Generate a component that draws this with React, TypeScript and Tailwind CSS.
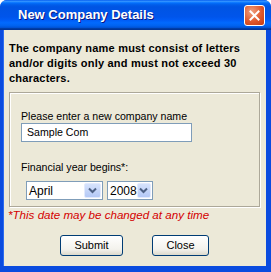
import React from "react";

function Chevron() {
  return (
    <svg width="9" height="7" viewBox="0 0 9 7">
      <path d="M1 1.5 L4.5 5 L8 1.5" fill="none" stroke="#4D6185" strokeWidth="2" />
    </svg>
  );
}

function Select({ value, width }: { value: string; width: string }) {
  return (
    <div className={`${width} h-[19px] bg-white border border-[#7F9DB9] flex items-stretch`}>
      <div className="flex-1 flex items-center pl-[2px] text-[12px] text-black leading-none">{value}</div>
      <div className="w-[17px] m-[1px] ml-0 rounded-[2px] border border-[#E2EAFD] bg-[linear-gradient(to_bottom,#D6E2FC,#B4C9F6)] flex items-center justify-center">
        <Chevron />
      </div>
    </div>
  );
}

function XPButton({ label, width }: { label: string; width: string }) {
  return (
    <button className={`${width} h-[21px] rounded-[3px] border border-[#003C74] bg-[linear-gradient(to_bottom,#FFFFFF,#F3F2EC_70%,#DCD9CC)] text-[11px] text-black flex items-center justify-center`}>
      {label}
    </button>
  );
}

export default function App() {
  return (
    <div className="w-[271px] h-[272px] bg-white" style={{ fontFamily: '"Liberation Sans", Arial, sans-serif' }}>
      <div className="w-[271px] h-[272px] rounded-t-[7px] bg-[#0A4BDF] flex flex-col overflow-hidden">
        <div className="h-[30px] shrink-0 flex items-center pl-[18px] pr-[6px] bg-[linear-gradient(to_bottom,#0058EE_0%,#3593FF_4%,#288EFF_6%,#127DFF_8%,#036FFC_10%,#0262EE_14%,#0057E5_20%,#0054E3_24%,#0055EB_56%,#005BF5_66%,#026AFE_76%,#0062EF_86%,#0052D6_92%,#0040AB_94%,#003092_100%)]">
          <div className="flex-1 text-white font-bold text-[13px] [text-shadow:1px_1px_#0A1883]">New Company Details</div>
          <div className="w-[21px] h-[21px] rounded-[3px] border border-white bg-[radial-gradient(circle_at_35%_30%,#F0A080,#E0582C_55%,#C23A10)] flex items-center justify-center">
            <svg width="11" height="11" viewBox="0 0 11 11">
              <path d="M1.5 1.5 L9.5 9.5 M9.5 1.5 L1.5 9.5" stroke="white" strokeWidth="2" strokeLinecap="square" />
            </svg>
          </div>
        </div>
        <div className="flex-1 ml-[3px] mr-[5px] mb-[6px] bg-[#ECE9D8] border-l border-[#2C6BEF] flex flex-col">
          <div className="pt-[11px] pl-[5px] pr-[2px] text-[11px] font-bold leading-[15px] tracking-[0.2px] text-black">
            The company name must consist of letters and/or digits only and must not exceed 30 characters.
          </div>
          <div className="ml-[5px] mt-[6px] w-[251px] h-[115px] border border-[#ACA899] shadow-[inset_1px_1px_0_#FFFFFF,1px_1px_0_#FFFFFF] pt-[16px] pl-[11px] flex flex-col">
            <div className="text-[10.6px] leading-[14px] text-black">Please enter a new company name</div>
            <div className="w-[171px] h-[19px] border border-[#7F9DB9] bg-white flex items-center pl-[5px] text-[10.6px] text-black">
              Sample Com
            </div>
            <div className="mt-[18px] text-[10.6px] leading-[14px] text-black">Financial year begins*:</div>
            <div className="mt-[7px] ml-[5px] flex gap-[4px]">
              <Select value="April" width="w-[77px]" />
              <Select value="2008" width="w-[46px]" />
            </div>
          </div>
          <div className="pl-[4px] mt-[1px] text-[11.6px] leading-[14px] italic text-[#D40000]">*This date may be changed at any time</div>
          <div className="mt-[13px] flex pl-[56px] gap-[29px]">
            <XPButton label="Submit" width="w-[63px]" />
            <XPButton label="Close" width="w-[57px]" />
          </div>
        </div>
      </div>
    </div>
  );
}
